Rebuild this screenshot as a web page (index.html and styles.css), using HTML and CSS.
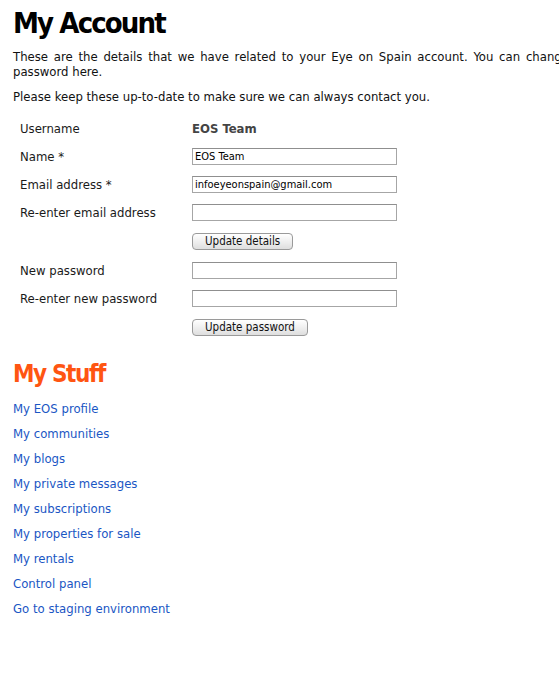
FILE: index.html
```html
<!DOCTYPE html>
<html>
<head>
<meta charset="utf-8">
<link rel="stylesheet" href="styles.css">
</head>
<body>
<div class="page">
  <h1 class="title">My Account</h1>
  <p class="intro">These are the details that we have related to your Eye on Spain account. You can change your password here.</p>
  <p class="intro2">Please keep these up-to-date to make sure we can always contact you.</p>

  <div class="form">
    <div class="row"><span class="label">Username</span><span class="value">EOS Team</span></div>
    <div class="row"><span class="label">Name *</span><input class="field" type="text" value="EOS Team"></div>
    <div class="row"><span class="label">Email address *</span><input class="field" type="text" value="infoeyeonspain@gmail.com"></div>
    <div class="row"><span class="label">Re-enter email address</span><input class="field" type="text" value=""></div>
    <div class="row btnrow"><span class="label"></span><span><button class="btn btn-details">Update details</button></span></div>
    <div class="row"><span class="label">New password</span><input class="field" type="password" value=""></div>
    <div class="row"><span class="label">Re-enter new password</span><input class="field" type="password" value=""></div>
    <div class="row btnrow"><span class="label"></span><span><button class="btn btn-password">Update password</button></span></div>
  </div>

  <h2 class="stuff">My Stuff</h2>
  <ul class="links">
    <li><a href="#">My EOS profile</a></li>
    <li><a href="#">My communities</a></li>
    <li><a href="#">My blogs</a></li>
    <li><a href="#">My private messages</a></li>
    <li><a href="#">My subscriptions</a></li>
    <li><a href="#">My properties for sale</a></li>
    <li><a href="#">My rentals</a></li>
    <li><a href="#">Control panel</a></li>
    <li><a href="#">Go to staging environment</a></li>
  </ul>
</div>
</body>
</html>
```
FILE: styles.css
```css
html, body {
  margin: 0;
  padding: 0;
  background: #fff;
}
body {
  font-family: "DejaVu Sans Condensed", "DejaVu Sans", sans-serif;
  font-size: 13px;
  color: #111;
  overflow: hidden;
}
.page {
  padding: 6px 0 0 13px;
  width: 588px;
}
.title {
  margin: 0;
  font-size: 29px;
  line-height: 34px;
  font-weight: bold;
  letter-spacing: -1.9px;
  color: #000;
}
.intro {
  margin: 9px 0 0 0;
  line-height: 15px;
  text-align: justify;
}
.intro2 {
  margin: 10px 0 0 0;
  line-height: 15px;
}
.form {
  margin: 10px 0 0 7px;
  display: flex;
  flex-direction: column;
}
.row {
  display: grid;
  grid-template-columns: 172px 1fr;
  align-items: center;
  height: 28px;
}
.btnrow {
  height: 30px;
}
.label {
  color: #1a1a1a;
}
.value {
  font-weight: bold;
  color: #444;
}
.field {
  box-sizing: border-box;
  width: 205px;
  height: 17px;
  margin: 0;
  padding: 0 2px;
  border: 1px solid #a6a6a6;
  border-top-color: #8f8f8f;
  font-family: inherit;
  font-size: 11px;
  color: #000;
  background: #fff;
  outline: none;
}
.btn {
  box-sizing: border-box;
  height: 17px;
  padding: 0 12px;
  border: 1px solid #9a9a9a;
  border-radius: 4px;
  background: linear-gradient(#ffffff, #ececec 60%, #dedede);
  font-family: inherit;
  font-size: 11.5px;
  color: #111;
  line-height: 15px;
}
.stuff {
  margin: 18px 0 0 0;
  font-size: 24px;
  line-height: 28px;
  letter-spacing: -1.4px;
  color: #ff5512;
  font-weight: bold;
}
.links {
  list-style: none;
  margin: 8px 0 0 0;
  padding: 0;
}
.links li {
  height: 25px;
  line-height: 25px;
}
.links a {
  color: #1a56c4;
  text-decoration: none;
}
```
